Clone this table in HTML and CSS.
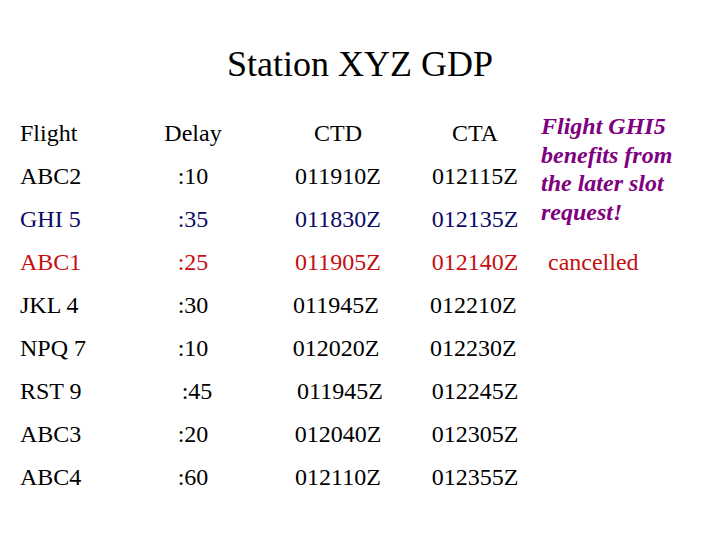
FILE: index.html
```html
<!DOCTYPE html>
<html lang="en">
<head>
    <meta charset="UTF-8">
    <title>Station XYZ GDP</title>
    <link rel="stylesheet" href="styles.css">
</head>
<body>
    <div class="slide">
        <h1>Station XYZ GDP</h1>

        <div class="gdpTable">
            <!-- header row -->
            <div class="flight">Flight</div>
            <div class="num">Delay</div>
            <div class="num">CTD</div>
            <div class="num">CTA</div>
            <div class="note">Flight GHI5<br>benefits from<br>the later slot<br>request!</div>

            <div class="flight">ABC2</div>
            <div class="num">:10</div>
            <div class="num">011910Z</div>
            <div class="num">012115Z</div>

            <div class="flight navy">GHI 5</div>
            <div class="num navy">:35</div>
            <div class="num navy">011830Z</div>
            <div class="num navy">012135Z</div>

            <div class="flight red">ABC1</div>
            <div class="num red">:25</div>
            <div class="num red">011905Z</div>
            <div class="num red">012140Z</div>
            <div class="status red">cancelled</div>

            <div class="flight">JKL 4</div>
            <div class="num">:30</div>
            <div class="num left2">011945Z</div>
            <div class="num left2">012210Z</div>
            <div class="status"></div>

            <div class="flight">NPQ 7</div>
            <div class="num">:10</div>
            <div class="num left2">012020Z</div>
            <div class="num left2">012230Z</div>
            <div class="status"></div>

            <div class="flight">RST 9</div>
            <div class="num right4">:45</div>
            <div class="num right2">011945Z</div>
            <div class="num">012245Z</div>
            <div class="status"></div>

            <div class="flight">ABC3</div>
            <div class="num">:20</div>
            <div class="num">012040Z</div>
            <div class="num">012305Z</div>
            <div class="status"></div>

            <div class="flight">ABC4</div>
            <div class="num">:60</div>
            <div class="num">012110Z</div>
            <div class="num">012355Z</div>
            <div class="status"></div>
        </div>
    </div>
</body>
</html>
```

FILE: styles.css
```css
* {
    box-sizing: border-box;
}
body {
    margin: 0;
    background-color: white;
    color: black;
    font-family: "Liberation Serif", "DejaVu Serif", serif;
}
.slide {
    width: 720px;
    height: 540px;
    padding-top: 44px;
}

h1 {
    margin: 0 0 28px 0;
    font-size: 36px;
    font-weight: normal;
    line-height: 40px;
    text-align: center;
}

.gdpTable {
    display: grid;
    grid-template-columns: 120px 106px 184px 90px 1fr;
    grid-auto-rows: 43px;
    padding-left: 20px;
    font-size: 24px;
    line-height: 43px;
}

.num {
    text-align: center;
    white-space: nowrap;
}

.note {
    grid-row: 1 / span 3;
    grid-column: 5;
    padding-left: 21px;
    color: #800080;
    font-weight: bold;
    font-style: italic;
    line-height: 28.5px;
}

.status {
    padding-left: 28px;
}

.navy {
    color: #0a0a66;
}
.red {
    color: #c41010;
}

.left2 {
    padding-right: 4px;
}
.right2 {
    padding-left: 4px;
}
.right4 {
    padding-left: 8px;
}
```
